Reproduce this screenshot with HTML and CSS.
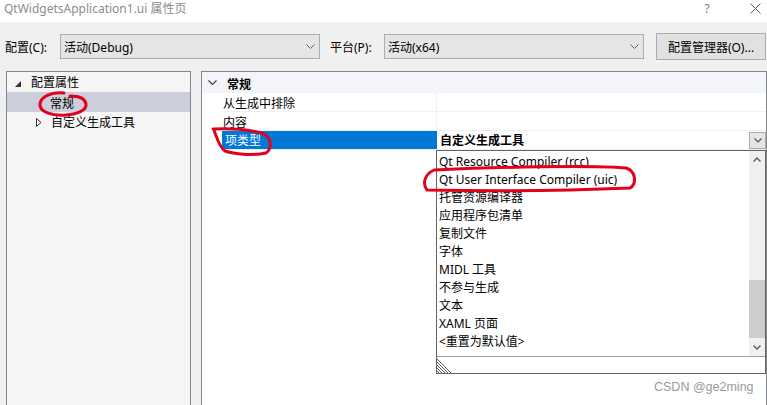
FILE: index.html
```html
<!DOCTYPE html>
<html lang="zh-CN">
<head>
  <meta charset="UTF-8">
  <title>QtWidgetsApplication1.ui 属性页</title>
  <link rel="stylesheet" href="styles.css">
</head>
<body>
<div class="window">

  <div class="titlebar">
    <span class="title">QtWidgetsApplication1.ui 属性页</span>
    <span class="help">?</span>
    <svg class="close" width="11" height="11" viewBox="0 0 11 11"><path d="M0.5 0.5 L10.5 10.5 M10.5 0.5 L0.5 10.5" stroke="#555" stroke-width="1" fill="none"/></svg>
  </div>

  <div class="toolbar">
    <label class="lbl">配置(C):</label>
    <div class="combo">
      <span>活动(Debug)</span>
      <svg class="chev" width="9" height="5" viewBox="0 0 9 5"><polyline points="0.5,0.5 4.5,4.5 8.5,0.5" stroke="#606060" fill="none"/></svg>
    </div>
    <label class="lbl lbl-plat">平台(P):</label>
    <div class="combo">
      <span>活动(x64)</span>
      <svg class="chev" width="9" height="5" viewBox="0 0 9 5"><polyline points="0.5,0.5 4.5,4.5 8.5,0.5" stroke="#606060" fill="none"/></svg>
    </div>
    <button class="btn">配置管理器(O)...</button>
  </div>

  <div class="main">
    <div class="tree">
      <div class="node">
        <svg class="expanded" width="6" height="6" viewBox="0 0 6 6"><polygon points="6,0 6,6 0,6" fill="#333"/></svg>
        配置属性
      </div>
      <div class="node child selected">常规</div>
      <div class="node child-collapsed">
        <svg class="collapsed" width="6" height="9" viewBox="0 0 6 9"><polygon points="0.5,0.5 5,4.5 0.5,8.5" stroke="#333" fill="none"/></svg>
        自定义生成工具
      </div>
    </div>

    <div class="grid">
      <div class="cat">
        <svg width="9" height="5" viewBox="0 0 9 5"><polyline points="0.5,0.5 4.5,4.5 8.5,0.5" stroke="#444" stroke-width="1.2" fill="none"/></svg>
        <b>常规</b>
      </div>
      <div class="row"><div class="name">从生成中排除</div><div class="value"></div></div>
      <div class="row"><div class="name">内容</div><div class="value"></div></div>
      <div class="row active">
        <div class="name">项类型</div>
        <div class="value">
          <b>自定义生成工具</b>
          <span class="drop-btn"><svg width="8" height="5" viewBox="0 0 8 5"><polyline points="0.5,0.5 4,4 7.5,0.5" stroke="#555" stroke-width="1.2" fill="none"/></svg></span>
        </div>
      </div>

      <div class="popup">
        <div class="list">
          <div class="items">
            <div class="item">Qt Resource Compiler (rcc)</div>
            <div class="item">Qt User Interface Compiler (uic)</div>
            <div class="item">托管资源编译器</div>
            <div class="item">应用程序包清单</div>
            <div class="item">复制文件</div>
            <div class="item">字体</div>
            <div class="item">MIDL 工具</div>
            <div class="item">不参与生成</div>
            <div class="item">文本</div>
            <div class="item">XAML 页面</div>
            <div class="item">&lt;重置为默认值&gt;</div>
          </div>
          <div class="scroll">
            <div class="arrow"><svg width="8" height="5" viewBox="0 0 8 5"><polyline points="0.5,4.5 4,1 7.5,4.5" stroke="#606060" stroke-width="1.5" fill="none"/></svg></div>
            <div class="track"><div class="thumb"></div></div>
            <div class="arrow"><svg width="8" height="5" viewBox="0 0 8 5"><polyline points="0.5,0.5 4,4 7.5,0.5" stroke="#606060" stroke-width="1.5" fill="none"/></svg></div>
          </div>
        </div>
        <div class="grip">
          <svg width="15" height="15" viewBox="0 0 15 15">
            <path d="M0 1 L14 15 M0 4 L11 15 M0 7 L8 15 M0 10 L5 15 M0 13 L2 15" stroke="#555" stroke-width="1" fill="none"/>
          </svg>
        </div>
      </div>
    </div>
  </div>

  <div class="watermark">CSDN @ge2ming</div>

  <!-- red hand-drawn marks over the screenshot -->
  <svg class="marks" width="767" height="405" viewBox="0 0 767 405">
    <g stroke="#e3001b" stroke-width="3" fill="none" stroke-linecap="round" stroke-linejoin="round">
      <path d="M64 93 C52 92 41 96 40 104 C39 112 52 116 66 115 C78 114 87 110 86 104 C85 98 78 96 70 96"/>
      <path d="M213 129 C228 128 250 129 264 134 C272 138 272 149 266 153 C252 156 234 154 225 151 C219 147 217 138 214 130"/>
      <path d="M434 170 C500 167 590 165 626 168 C636 171 637 184 630 188 C560 191 480 191 427 190 C423 185 423 175 434 170"/>
    </g>
  </svg>
</div>
</body>
</html>
```

FILE: styles.css
```css
body {
  margin: 0;
  background-color: #f0f0f0;
  font-family: "Noto Sans", "Noto Sans CJK SC", sans-serif;
  font-size: 12px;
  color: #000;
}
.window {
  position: relative;
  width: 767px;
  height: 405px;
  overflow: hidden;
}

/* title bar */
.titlebar {
  height: 22px;
  background: #fff;
  display: flex;
  align-items: flex-start;
  padding-left: 4px;
}
.title {
  line-height: 17px;
  color: #8c8c8c;
}
.help {
  margin-left: auto;
  width: 12px;
  text-align: center;
  line-height: 17px;
  color: #808080;
}
.close {
  margin: 3px 6px 0 37px;
}

/* config row */
.toolbar {
  height: 49px;
  display: flex;
  align-items: center;
  padding-left: 5px;
}
.lbl {
  width: 55px;
}
.lbl-plat {
  margin-left: 10px;
  width: 54px;
}
.combo {
  width: 260px;
  height: 25px;
  box-sizing: border-box;
  border: 1px solid #adadad;
  background: #e5e5e5;
  display: flex;
  align-items: center;
  padding-left: 3px;
}
.combo .chev {
  margin-left: auto;
  margin-right: 4px;
}
.btn {
  margin-left: 12px;
  width: 110px;
  height: 27px;
  border: 1px solid #adadad;
  background: #e1e1e1;
  font-family: inherit;
  font-size: 12px;
  padding: 0;
}

/* panels */
.main {
  display: flex;
  gap: 10px;
  padding-left: 6px;
  height: 345px;
}
.tree {
  width: 185px;
  box-sizing: border-box;
  border: 1px solid #828790;
  background: #f5f5f5;
}
.node {
  height: 20px;
  display: flex;
  align-items: center;
  padding-left: 8px;
}
.node .expanded {
  margin: 3px 10px 0 0;
}
.node.child {
  padding-left: 43px;
  padding-top: 1px;
  box-sizing: border-box;
}
.node.child-collapsed {
  padding-left: 29px;
}
.node .collapsed {
  margin-right: 9px;
}
.selected {
  background: #cccedb;
}

.grid {
  position: relative;
  width: 566px;
  box-sizing: border-box;
  border: 1px solid #828790;
  background: #fff;
}
.cat {
  height: 21px;
  background: #f3f5fa;
  display: flex;
  align-items: center;
  padding-left: 6px;
}
.cat svg {
  margin-right: 10px;
}
.cat b {
  margin-top: 2px;
}
.row {
  display: flex;
  height: 19px;
  margin-left: 20px;
  box-sizing: border-box;
  border-bottom: 1px solid #f0f0f0;
  line-height: 18px;
}
.name {
  width: 215px;
  box-sizing: border-box;
  border-right: 1px solid #f0f0f0;
  padding: 2px 0 0 1px;
}
.value {
  flex: 1;
  display: flex;
  align-items: center;
  padding-left: 3px;
}
.value b {
  margin-top: 1px;
}
.row.active .name {
  background: #0078d7;
  color: #fff;
  padding: 1px 0 0 3px;
  border-right: none;
}
.drop-btn {
  margin-left: auto;
  width: 17px;
  height: 17px;
  box-sizing: border-box;
  border: 1px solid #adadad;
  background: #e5e5e5;
  display: flex;
  align-items: center;
  justify-content: center;
}

/* dropdown popup */
.popup {
  position: absolute;
  left: 234px;
  top: 78px;
  width: 330px;
  box-sizing: border-box;
  border: 1px solid #646464;
  background: #fff;
}
.list {
  height: 206px;
  box-sizing: border-box;
  border-bottom: 1px solid #a0a0a0;
  display: flex;
}
.items {
  flex: 1;
  padding: 2px 0 0 2px;
}
.item {
  height: 18px;
  line-height: 18px;
  white-space: nowrap;
}
.scroll {
  width: 16px;
  background: #f0f0f0;
  display: flex;
  flex-direction: column;
}
.arrow {
  height: 17px;
  display: flex;
  align-items: center;
  justify-content: center;
}
.track {
  flex: 1;
}
.thumb {
  margin-top: 112px;
  height: 58px;
  background: #cdcdcd;
}
.grip {
  height: 16px;
  padding: 1px 0 0 0;
  box-sizing: border-box;
}
.grip svg {
  display: block;
}

.watermark {
  position: absolute;
  left: 654px;
  top: 380px;
  font-family: "Liberation Sans", sans-serif;
  font-size: 12.5px;
  color: #9a9a9a;
}
.marks {
  position: absolute;
  left: 0;
  top: 0;
  pointer-events: none;
}
```
